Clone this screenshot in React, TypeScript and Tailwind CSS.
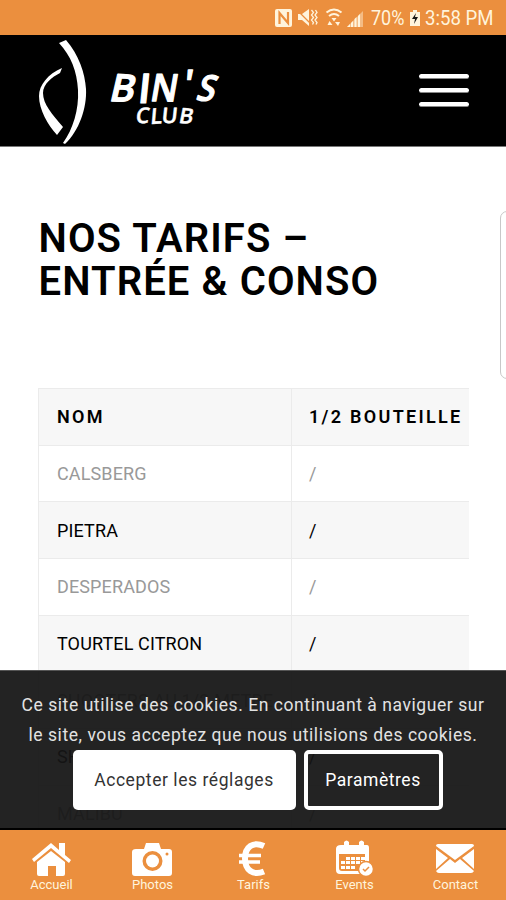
import React from "react";

const rows = [
  { name: "CALSBERG", dark: false },
  { name: "PIETRA", dark: true },
  { name: "DESPERADOS", dark: false },
  { name: "TOURTEL CITRON", dark: true },
  { name: "SHOOTERS AU 1/2 METRE", dark: false },
  { name: "SHOOTERS", dark: true },
  { name: "MALIBU", dark: false },
];

function StatusIcons() {
  return (
    <svg className="h-[35px] w-[96px] shrink-0" viewBox="0 0 96 35" fill="#fff4dc">
      <rect x="1" y="8" width="17" height="18" rx="2" />
      <path d="M5.500 23V12l8.500 10V11" fill="none" stroke="#eb8f3e" strokeWidth="2.200" />
      <path d="M24 13h4l7-5v17l-7-6h-4z" />
      <path d="M23 9l15 15" stroke="#eb8f3e" strokeWidth="1.200" />
      <path d="M37.500 9l2 2.500-2 2.500 2 2.500-2 2.500 2 2.500-1 2M41.500 9l1.500 2.500-2 2.500 2 2.500-2 2.500 2 2.500-1 2" fill="none" stroke="#fff4dc" strokeWidth="1.300" />
      <path d="M52.500 11.500q7.500-6 15 0M55 15q5-4 10 0" fill="none" stroke="#fff4dc" strokeWidth="2" />
      <path d="M57.500 17h5L60 20.500zM55.500 20l3 4h-5zM64 25l-3-4h5z" />
      <path d="M73 26L89 10v16z" opacity=".45" />
      <path d="M73 26l3-3v3zM77 26v-4l2-2v6zM80.500 26v-8l2-2v10zM84 26V15l2-2v13z" />
    </svg>
  );
}

function Logo() {
  return (
    <svg className="h-[111px] w-[190px]" viewBox="0 0 190 111" fill="white">
      <path d="M20 8L27 5C40 20 46 38 47 54C48 73 40 96 26 109L24 108C34 94 40 75 39 55C38 36 32 21 20 8Z" />
      <path d="M23 33C9 39 0 50 0 61C0 75 9 90 18 100L24 92C13 79 4 69 4 58C4 49 13 42 21 38Z" />
      <g fontFamily="'Open Sans', 'Liberation Sans', sans-serif" stroke="white" strokeLinejoin="round">
        <g fontSize="38" fontWeight="600" strokeWidth="1.200">
          <text transform="translate(69 66) rotate(2) skewX(-11)">B</text>
          <text transform="translate(98 68) skewX(-6)" fontSize="41">I</text>
          <text transform="translate(110 66) rotate(1) skewX(-9)" textLength="27" lengthAdjust="spacingAndGlyphs">N</text>
          <text transform="translate(143 62) skewX(-8)" fontSize="38">'</text>
          <text transform="translate(156 65) rotate(4) skewX(-13)" fontSize="36" textLength="18" lengthAdjust="spacingAndGlyphs">S</text>
        </g>
        <g fontSize="21.500" fontWeight="600" strokeWidth=".5">
          <text transform="translate(96 88) skewX(-8)">C</text>
          <text transform="translate(111 89) rotate(-3) skewX(-8)">L</text>
          <text transform="translate(122 88) skewX(-6)">U</text>
          <text transform="translate(139 88) rotate(3) skewX(-8)">B</text>
        </g>
      </g>
    </svg>
  );
}

const icons = {
  Accueil: (
    <>
      <path d="M1 19L20 3l8 7V3h6v12l6 5-2 3L20 8 3 22z" />
      <path d="M6 22L20 11l14 11v12q0 2-2 2h-7V26h-8v10H8q-2 0-2-2z" />
    </>
  ),
  Photos: (
    <>
      <path fillRule="evenodd" d="M4 9h8l2-6h13l2 6h8q3 0 3 3v21q0 3-3 3H3q-3 0-3-3V12q0-3 4-3zM20.500 11a10 10 0 100 20 10 10 0 000-20z" />
      <circle cx="20.500" cy="21" r="6.500" />
      <circle cx="35" cy="14" r="1.500" fill="#eb8f3e" />
    </>
  ),
  Tarifs: (
    <g fill="none" stroke="white">
      <path d="M31 6C20 1 12 7 12 18.500S20 36 31 31.500" strokeWidth="6" />
      <path d="M6 15.500h22M6 22h21" strokeWidth="3.600" />
    </g>
  ),
  Events: (
    <>
      <path fillRule="evenodd" d="M7 5h3V2q2.500-3 5 0v3h10V2q2.500-3 5 0v3h3q2 0 2 3v20q0 6-7 6H6q-4 0-4-4V9q0-4 5-4zM5 14v14q0 3 3 3h23V14z" />
      <path d="M12 17h4v3h-4zm5 0h4v3h-4zm5 0h4v3h-4zm5 0h4v3h-4zM7 21h4v3H7zm5 0h4v3h-4zm5 0h4v3h-4zm5 0h4v3h-4zm5 0h4v3h-4zM7 26h4v3H7zm5 0h4v3h-4zm5 0h4v3h-4z" />
      <circle cx="32" cy="29" r="7.500" stroke="#eb8f3e" strokeWidth="1.500" />
      <path d="M29 29l2 2 4-4" fill="none" stroke="#eb8f3e" strokeWidth="1.500" />
    </>
  ),
  Contact: (
    <>
      <path d="M3 4h34q2 0 2 2L20 20 1 6q0-2 2-2z" />
      <path d="M1 9l12 9L1 29zM39 9l-12 9 12 11zM15 19l5 4 5-4 14 12q-1 2-3 2H4q-2 0-3-2z" />
    </>
  ),
};

export default function App() {
  return (
    <div className="relative flex h-[900px] w-[506px] flex-col overflow-hidden bg-white font-[Roboto,'Liberation_Sans',sans-serif]">
      <header className="flex h-[35px] shrink-0 items-center bg-[#eb8f3e] pt-px pl-[274px] text-[20px] text-[#fff4dc]">
        <StatusIcons />
        <span className="ml-px w-[37px] origin-left scale-x-[0.9] whitespace-nowrap">70%</span>
        <svg className="ml-px h-[20px] w-[12px] shrink-0" viewBox="0 0 12 20">
          <path d="M1 4h3V2h4v2h3v14H1z" fill="#fff4dc" />
          <path d="M7 5l-4 6h3l-1 5 4-7H6z" fill="#171717" />
        </svg>
        <span className="ml-[4px] origin-left scale-x-[0.93] whitespace-nowrap">3:58 PM</span>
      </header>
      <nav className="flex h-[112px] shrink-0 items-center justify-between border-b border-[#777] bg-black pr-[37px] pl-[39px]">
        <Logo />
        <div className="flex w-[50px] flex-col gap-[9px]">
          <span className="h-[5px] rounded-full border-b border-[#888] bg-white" />
          <span className="h-[5px] rounded-full border-b border-[#888] bg-white" />
          <span className="h-[5px] rounded-full border-b border-[#888] bg-white" />
        </div>
      </nav>
      <main className="flex min-h-0 flex-1 flex-col overflow-hidden pt-[70px] pl-[38px]">
        <h1 className="h-[170.500px] shrink-0 pl-[0.500px] text-[40px] leading-[43px] font-semibold tracking-[1.1px] text-black">
          NOS TARIFS –<br />ENTRÉE &amp; CONSO
        </h1>
        <div className="w-[431px] shrink-0 overflow-hidden border-t border-l border-[#ebebeb]">
          <div className="grid h-[57px] grid-cols-[253px_1fr] border-b border-[#ebebeb] bg-[#f7f7f7] text-[18px] font-semibold tracking-[2.3px] text-black">
            <span className="flex items-center border-r border-[#ebebeb] pb-px pl-[18px]">NOM</span>
            <span className="flex items-center pb-px pl-[17px] whitespace-nowrap">1/2 BOUTEILLE</span>
          </div>
          {rows.map((row) => (
            <div key={row.name} className={`grid h-[56.700px] grid-cols-[253px_1fr] border-b border-[#ebebeb] text-[18px] tracking-[0.13px] ${row.dark ? "bg-[#f7f7f7] text-black" : "bg-white text-[#999]"}`}>
              <span className="flex items-center border-r border-[#ebebeb] pl-[18px] whitespace-nowrap">{row.name}</span>
              <span className="flex items-center pl-[17px]">/</span>
            </div>
          ))}
        </div>
      </main>
      <aside className="absolute top-[211px] right-[-8px] h-[168px] w-[14px] rounded-[7px] border border-[#c8c8c8] bg-white" />
      <section className="absolute top-[670px] left-0 flex h-[160px] w-full flex-col items-center border-t border-b-2 border-t-[#555] border-b-black bg-[#151515]/94 pt-[19px] text-[#e2e2e2]">
        <p className="text-center text-[17.500px] leading-[30px] tracking-[0.56px] whitespace-nowrap">
          Ce site utilise des cookies. En continuant à naviguer sur<br />le site, vous acceptez que nous utilisions des cookies.
        </p>
        <div className="mr-[-9px] flex gap-[8px] text-[17.500px] tracking-[0.56px]">
          <button className="h-[60px] w-[223px] rounded-[5px] bg-white text-[#333]">Accepter les réglages</button>
          <button className="h-[60px] w-[139px] rounded-[5px] border-[4px] border-white text-white">Paramètres</button>
        </div>
      </section>
      <footer className="grid h-[70px] shrink-0 grid-cols-5 bg-[#eb8f3e] pt-[10px] pl-px text-[#fff4dc]">
        {Object.entries(icons).map(([label, icon]) => (
          <div key={label} className="flex flex-col items-center">
            <svg className="h-[37px] w-[41px]" viewBox="0 0 41 37" fill="white">{icon}</svg>
            <span className="text-[13px] leading-[16px]">{label}</span>
          </div>
        ))}
      </footer>
    </div>
  );
}
